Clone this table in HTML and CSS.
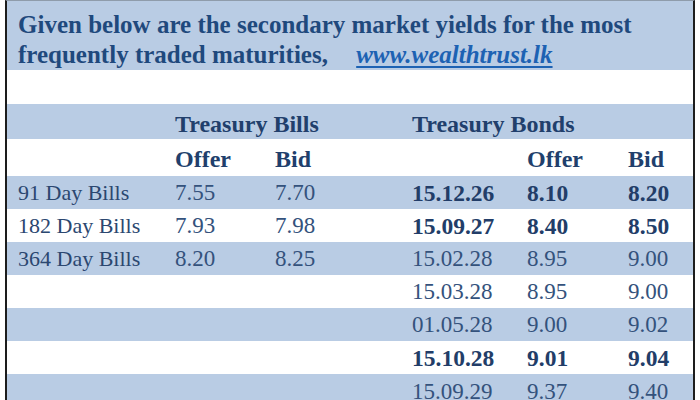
FILE: index.html
```html
<!DOCTYPE html>
<html lang="en">
<head>
	<meta charset="UTF-8">
	<title>Secondary market yields</title>
	<link rel="stylesheet" href="styles.css">
</head>
<body>
	<div class="sheet">
		<div class="intro">
			Given below are the secondary market yields for the most<br>
			frequently traded maturities, <a href="##" class="site">www.wealthtrust.lk</a>
		</div>
		<div class="gap"></div>

		<div class="row band head">
			<span></span>
			<span class="span2">Treasury Bills</span>
			<span class="span2">Treasury Bonds</span>
			<span></span>
		</div>
		<div class="row head sub">
			<span></span>
			<span>Offer</span>
			<span>Bid</span>
			<span></span>
			<span>Offer</span>
			<span>Bid</span>
		</div>

		<div class="row band">
			<span>91 Day Bills</span>
			<span class="num">7.55</span>
			<span class="num">7.70</span>
			<b>15.12.26</b>
			<b>8.10</b>
			<b>8.20</b>
		</div>
		<div class="row">
			<span>182 Day Bills</span>
			<span class="num">7.93</span>
			<span class="num">7.98</span>
			<b>15.09.27</b>
			<b>8.40</b>
			<b>8.50</b>
		</div>
		<div class="row band">
			<span>364 Day Bills</span>
			<span class="num">8.20</span>
			<span class="num">8.25</span>
			<span class="num">15.02.28</span>
			<span class="num">8.95</span>
			<span class="num">9.00</span>
		</div>
		<div class="row">
			<span></span><span></span><span></span>
			<span class="num">15.03.28</span>
			<span class="num">8.95</span>
			<span class="num">9.00</span>
		</div>
		<div class="row band">
			<span></span><span></span><span></span>
			<span class="num">01.05.28</span>
			<span class="num">9.00</span>
			<span class="num">9.02</span>
		</div>
		<div class="row">
			<span></span><span></span><span></span>
			<b>15.10.28</b>
			<b>9.01</b>
			<b>9.04</b>
		</div>
		<div class="row band last">
			<span></span><span></span><span></span>
			<span class="num">15.09.29</span>
			<span class="num">9.37</span>
			<span class="num">9.40</span>
		</div>
	</div>
</body>
</html>
```

FILE: styles.css
```css
*{
	margin: 0;
	padding: 0;
	box-sizing: border-box;
}
body{
	background-color: #fff;
	font-family: 'Liberation Serif', 'Times New Roman', serif;
	color: #2b4770;
}
.sheet{
	width: 690px;
	height: 400px;
	margin-left: 5px;
	border-left: 2px solid #1d1d1d;
	border-right: 2px solid #1d1d1d;
	border-top: 1px solid #8f9cab;
	overflow: hidden;
}
.intro{
	background-color: #b9cce4;
	color: #1f497d;
	font-weight: bold;
	font-size: 25px;
	line-height: 30px;
	padding: 9px 11px 0;
	height: 69px;
	white-space: nowrap;
}
.site{
	color: #1d62b3;
	font-style: italic;
	margin-left: 22px;
	text-decoration: underline;
	text-decoration-thickness: 2px;
	text-underline-offset: 3px;
}
.gap{
	height: 34px;
}
.row{
	display: grid;
	grid-template-columns: 157px 100px 137px 115px 101px 1fr;
	align-items: center;
	height: 33px;
	padding-left: 11px;
	font-size: 22px;
	line-height: 24px;
	white-space: nowrap;
}
.band{
	background-color: #b9cce4;
}
.row b{
	color: #223d68;
	font-size: 23.5px;
}
.num{
	font-size: 23px;
	color: #34527c;
}
.head{
	height: 35px;
	align-items: start;
	padding-top: 8px;
	font-weight: bold;
	font-size: 24px;
	color: #213f6c;
}
.sub{
	height: 37px;
}
.span2{
	grid-column: span 2;
}
.last{
	align-items: start;
	padding-top: 6px;
}
```
